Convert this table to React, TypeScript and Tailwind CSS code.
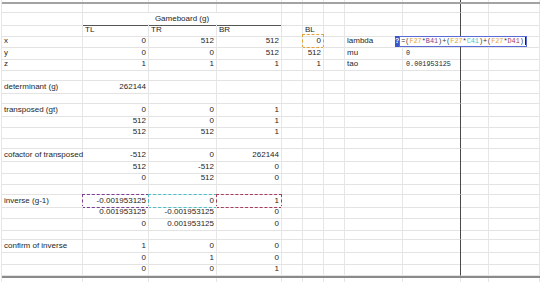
import React from "react";

type C = {
  v?: string;
  a?: "l" | "r" | "c";
  m?: boolean; // monospace value
  d?: string; // dashed reference colour
  span?: number;
  u?: boolean; // underline (bottom border)
  f?: boolean; // formula editor
};

const ORANGE = "#e3a33a";
const PURPLE = "#7b3f8f";
const TEAL = "#4bbfc4";
const RED = "#a83c5c";

const COLS =
  "grid grid-cols-[81px_66px_68px_65px_21px_21px_21px_58px_58px_28px_51px]";

const E: C = {};
const txt = (v: string): C => ({ v });
const num = (v: string, d?: string): C => ({ v, a: "r", d });
const blank: C[] = Array(11).fill(E);

const mat = (label: string, b: string, c: string, d: string, dash: string[] = []): C[] => [
  label ? txt(label) : E,
  num(b, dash[0]),
  num(c, dash[1]),
  num(d, dash[2]),
  E, E, E, E, E, E, E,
];

const rows: C[][] = [
  [E, { v: "Gameboard (g)", a: "c", span: 3, u: true }, E, E, E, E, E, E, E],
  [E, txt("TL"), txt("TR"), txt("BR"), E, txt("BL"), E, E, E, E, E],
  [txt("x"), num("0"), num("512"), num("512"), E, num("0", ORANGE), E, txt("lambda"), { f: true }, E, E],
  [txt("y"), num("0"), num("0"), num("512"), E, num("512"), E, txt("mu"), { v: "0", m: true }, E, E],
  [txt("z"), num("1"), num("1"), num("1"), E, num("1"), E, txt("tao"), { v: "0.001953125", m: true }, E, E],
  blank,
  [txt("determinant (g)"), num("262144"), E, E, E, E, E, E, E, E, E],
  blank,
  mat("transposed (gt)", "0", "0", "1"),
  mat("", "512", "0", "1"),
  mat("", "512", "512", "1"),
  blank,
  mat("cofactor of transposed", "-512", "0", "262144"),
  mat("", "512", "-512", "0"),
  mat("", "0", "512", "0"),
  blank,
  mat("inverse (g-1)", "-0.001953125", "0", "1", [PURPLE, TEAL, RED]),
  mat("", "0.001953125", "-0.001953125", "0"),
  mat("", "0", "0.001953125", "0"),
  blank,
  mat("confirm of inverse", "1", "0", "0"),
  mat("", "0", "1", "0"),
  mat("", "0", "0", "1"),
];

function Formula() {
  const seg: [string, string][] = [
    ["=(", "#333"],
    ["F27", ORANGE],
    ["*", "#333"],
    ["B41", PURPLE],
    [")+(", "#333"],
    ["F27", ORANGE],
    ["*", "#333"],
    ["C41", TEAL],
    [")+(", "#333"],
    ["F27", ORANGE],
    ["*", "#333"],
    ["D41", RED],
    [")", "#333"],
  ];
  return (
    <div className="absolute left-[-8px] top-[0.5px] z-10 flex h-[11px] w-[131px]">
      <span className="flex w-[7px] items-center justify-center bg-[#3a56c8] text-[7px] font-bold text-white">
        ?
      </span>
      <span className="flex flex-1 items-center border border-[#5a6ad6] bg-white pl-[1px] font-['Liberation_Mono',monospace] text-[6.8px]">
        {seg.map(([s, col], i) => (
          <span key={i} style={{ color: col }}>
            {s}
          </span>
        ))}
        <span className="ml-px h-[8px] w-px bg-[#222]" />
      </span>
    </div>
  );
}

function SheetRow({ cells }: { cells: C[] }) {
  let col = 0;
  return (
    <div className={`${COLS} h-[11.4px]`}>
      {cells.map((c, i) => {
        const start = col;
        col += c.span ?? 1;
        const freeze = start === 8;
        return (
          <div
            key={i}
            className={`relative flex items-center whitespace-nowrap border-b border-r px-[2px] ${
              c.span === 3 ? "col-span-3" : ""
            } ${c.u ? "border-b-[#555]" : "border-b-[#e3e3e3]"} ${
              freeze ? "border-r-[#4a4a4a]" : "border-r-[#e6e6e6]"
            } ${c.a === "r" ? "justify-end" : c.a === "c" ? "justify-center" : "justify-start"} ${
              c.m ? "font-['Liberation_Mono',monospace] text-[6.8px] pl-[3px]" : ""
            }`}
          >
            {c.v}
            {c.d && (
              <span
                className="absolute -inset-px border-[1.5px] border-dashed"
                style={{ borderColor: c.d }}
              />
            )}
            {c.f && <Formula />}
          </div>
        );
      })}
    </div>
  );
}

function Lines({ h, freeze }: { h: string; freeze: boolean }) {
  return (
    <div className={`${COLS} ${h}`}>
      {Array.from({ length: 11 }).map((_, i) => (
        <div
          key={i}
          className={`border-r ${
            freeze && i === 8 ? "border-r-[#4a4a4a]" : "border-r-[#e6e6e6]"
          }`}
        />
      ))}
    </div>
  );
}

export default function App() {
  return (
    <div className="h-[282px] w-[540px] overflow-hidden bg-white pl-px font-['Liberation_Sans',Arial,sans-serif] text-[8px] text-[#262626]">
      <div className="border-l border-[#e6e6e6]">
        <Lines h="h-[2px]" freeze />
        <div className="h-[2px] bg-[#a3a3a3]" />
        <div className={`${COLS} h-[8.5px]`}>
          {Array.from({ length: 11 }).map((_, i) => (
            <div
              key={i}
              className={`border-b border-r border-b-[#e3e3e3] ${
                i === 8 ? "border-r-[#4a4a4a]" : "border-r-[#e6e6e6]"
              }`}
            />
          ))}
        </div>
        {rows.map((r, i) => (
          <SheetRow key={i} cells={r} />
        ))}
        <Lines h="h-[1.3px]" freeze />
        <div className="h-[2px] bg-[#8a8a8a]" />
        <Lines h="h-[6px]" freeze={false} />
      </div>
    </div>
  );
}
